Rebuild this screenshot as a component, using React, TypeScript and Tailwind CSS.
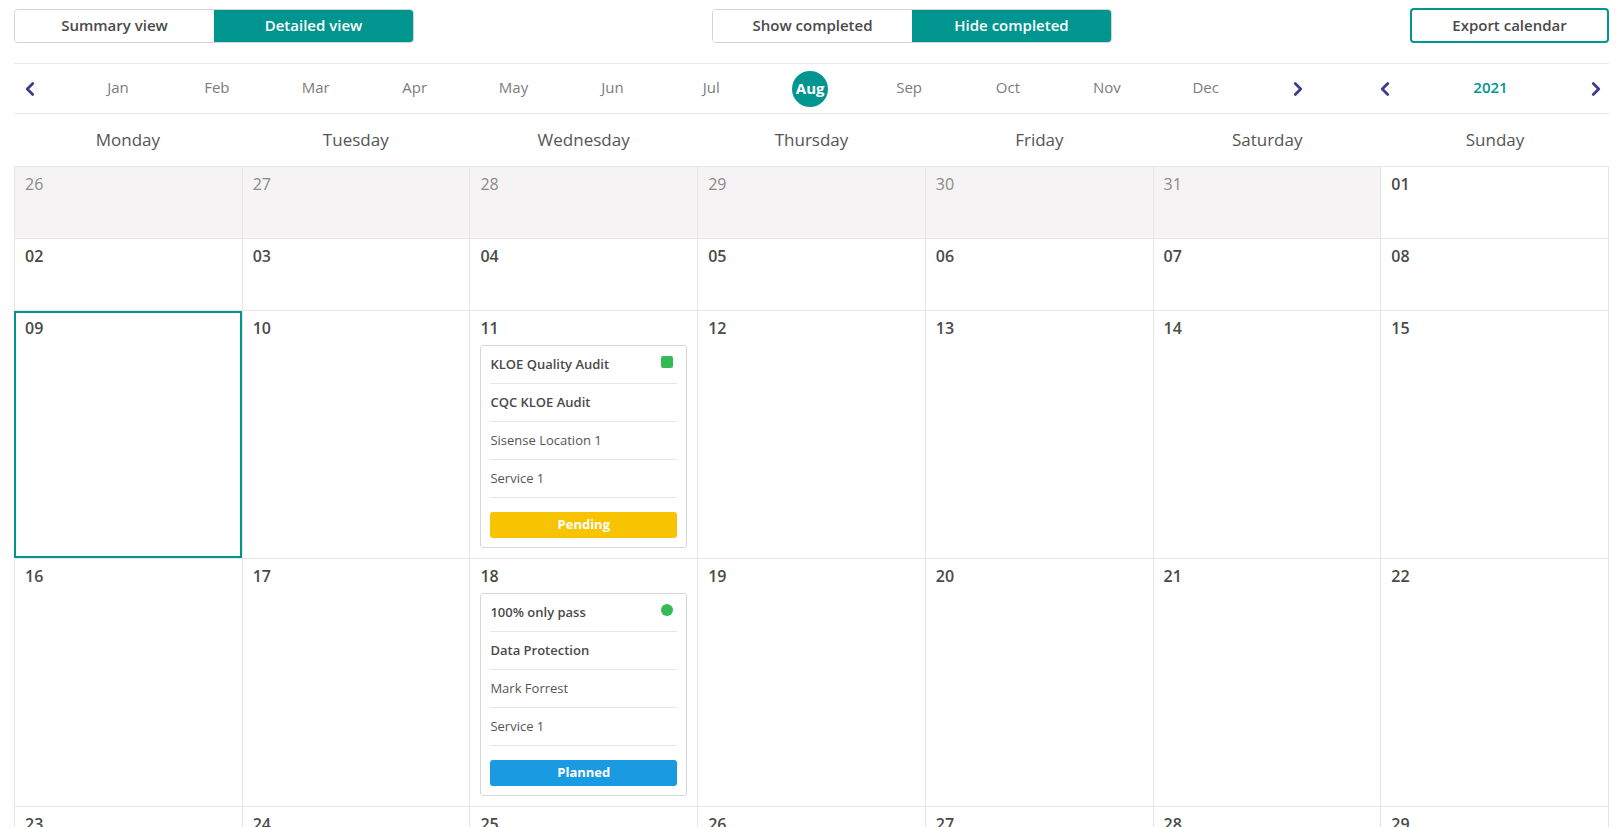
import React from 'react';
import { ChevronLeft, ChevronRight } from 'lucide-react';

const months = ['Jan', 'Feb', 'Mar', 'Apr', 'May', 'Jun', 'Jul', 'Aug', 'Sep', 'Oct', 'Nov', 'Dec'];
const weekdays = ['Monday', 'Tuesday', 'Wednesday', 'Thursday', 'Friday', 'Saturday', 'Sunday'];

interface CalEvent {
  title: string;
  audit: string;
  who: string;
  service: string;
  status: 'Pending' | 'Planned';
  marker: 'square' | 'circle';
}

interface Day {
  label: string;
  muted?: boolean;
  selected?: boolean;
  event?: CalEvent;
}

const weeks: { height: string; days: Day[] }[] = [
  {
    height: 'h-[72px]',
    days: [
      { label: '26', muted: true },
      { label: '27', muted: true },
      { label: '28', muted: true },
      { label: '29', muted: true },
      { label: '30', muted: true },
      { label: '31', muted: true },
      { label: '01' },
    ],
  },
  {
    height: 'h-[72px]',
    days: ['02', '03', '04', '05', '06', '07', '08'].map((l) => ({ label: l })),
  },
  {
    height: 'h-[248px]',
    days: [
      { label: '09', selected: true },
      { label: '10' },
      {
        label: '11',
        event: {
          title: 'KLOE Quality Audit',
          audit: 'CQC KLOE Audit',
          who: 'Sisense Location 1',
          service: 'Service 1',
          status: 'Pending',
          marker: 'square',
        },
      },
      { label: '12' },
      { label: '13' },
      { label: '14' },
      { label: '15' },
    ],
  },
  {
    height: 'h-[248px]',
    days: [
      { label: '16' },
      { label: '17' },
      {
        label: '18',
        event: {
          title: '100% only pass',
          audit: 'Data Protection',
          who: 'Mark Forrest',
          service: 'Service 1',
          status: 'Planned',
          marker: 'circle',
        },
      },
      { label: '19' },
      { label: '20' },
      { label: '21' },
      { label: '22' },
    ],
  },
  {
    height: 'h-[248px]',
    days: ['23', '24', '25', '26', '27', '28', '29'].map((l) => ({ label: l })),
  },
];

const EventCard: React.FC<{ ev: CalEvent }> = ({ ev }) => (
  <div className="mt-[6px] rounded-[3px] border border-[#d6d6d6] bg-white px-[9px] pb-[9px]">
    <div className="flex h-[38px] items-center justify-between border-b border-[#e6e6e6] text-[13px] font-semibold text-[#4a4a4a]">
      <span>{ev.title}</span>
      {ev.marker === 'square' ? (
        <span className="mb-[5px] mr-[4px] h-[12px] w-[12px] rounded-[2px] bg-[#35bb55]" />
      ) : (
        <span className="mb-[5px] mr-[4px] h-[12px] w-[12px] rounded-full bg-[#35bb55]" />
      )}
    </div>
    <div className="flex h-[38px] items-center border-b border-[#e6e6e6] text-[13px] font-semibold text-[#4a4a4a]">
      {ev.audit}
    </div>
    <div className="flex h-[38px] items-center border-b border-[#e6e6e6] text-[13px] text-[#555]">
      {ev.who}
    </div>
    <div className="flex h-[38px] items-center border-b border-[#e6e6e6] text-[13px] text-[#555]">
      {ev.service}
    </div>
    <div
      className={`mt-[14px] flex h-[26px] items-center justify-center rounded-[3px] text-[13px] font-bold text-white ${
        ev.status === 'Pending' ? 'bg-[#f8c300]' : 'bg-[#1a9ae1]'
      }`}
    >
      {ev.status}
    </div>
  </div>
);

export default function App() {
  return (
    <div
      className="flex h-[827px] flex-col overflow-hidden bg-white px-[14px] pt-[8px] text-[#4a4a4a]"
      style={{ fontFamily: '"Open Sans", "Noto Sans", sans-serif' }}
    >
      {/* toolbar */}
      <div className="flex shrink-0 items-center justify-between">
        <div className="flex h-[34px] w-[400px] overflow-hidden rounded-[4px] border border-[#d3d3d3]">
          <button className="flex-1 bg-white text-[15px] font-semibold text-[#4a4a4a]">Summary view</button>
          <button className="flex-1 bg-[#00968f] text-[15px] font-semibold text-white">Detailed view</button>
        </div>
        <div className="flex h-[34px] w-[400px] overflow-hidden rounded-[4px] border border-[#d3d3d3]">
          <button className="flex-1 bg-white text-[15px] font-semibold text-[#4a4a4a]">Show completed</button>
          <button className="flex-1 bg-[#00968f] text-[15px] font-semibold text-white">Hide completed</button>
        </div>
        <button className="h-[35px] w-[199px] rounded-[4px] border-2 border-[#00968f] bg-white text-[15px] font-semibold text-[#4a4a4a]">
          Export calendar
        </button>
      </div>

      {/* month / year nav */}
      <div className="mt-[20px] flex h-[51px] shrink-0 items-center border-y border-[#e8e8e8]">
        <div className="flex w-[54.5px] items-center pl-[5px] text-[#3d3b8e]">
          <ChevronLeft size={22} strokeWidth={3} />
        </div>
        {months.map((m) => (
          <div key={m} className="flex w-[98.9px] items-center justify-center">
            {m === 'Aug' ? (
              <span className="flex h-[36px] w-[36px] items-center justify-center rounded-full bg-[#00968f] text-[15px] font-bold text-white">
                Aug
              </span>
            ) : (
              <span className="pb-[2px] text-[15px] text-[#7c7c7c]">{m}</span>
            )}
          </div>
        ))}
        <div className="flex w-[58px] items-center justify-end pr-[4px] text-[#3d3b8e]">
          <ChevronRight size={22} strokeWidth={3} />
        </div>
        <div className="ml-auto flex w-[238px] items-center justify-between pl-[3px] pr-[2px] text-[#3d3b8e]">
          <ChevronLeft size={22} strokeWidth={3} />
          <span className="pb-[2px] text-[15px] font-semibold text-[#00968f]">2021</span>
          <ChevronRight size={22} strokeWidth={3} />
        </div>
      </div>

      {/* weekday header */}
      <div className="grid h-[52px] shrink-0 grid-cols-7 items-center">
        {weekdays.map((d) => (
          <div key={d} className="text-center text-[17px] text-[#555]">
            {d}
          </div>
        ))}
      </div>

      {/* month grid */}
      <div className="min-h-0 flex-1 overflow-hidden">
        <div className="border-l border-t border-[#e6e6e6]">
          {weeks.map((w, wi) => (
            <div key={wi} className={`grid grid-cols-7 ${w.height}`}>
              {w.days.map((d, di) => (
                <div
                  key={di}
                  className={`relative border-b border-r border-[#e6e6e6] px-[10px] pt-[6px] ${
                    d.muted ? 'bg-[#f5f3f4]' : 'bg-white'
                  }`}
                >
                  <div
                    className={`text-[16px] leading-[22px] ${
                      d.muted ? 'text-[#8a8a8a]' : 'font-semibold text-[#4a4a4a]'
                    }`}
                  >
                    {d.label}
                  </div>
                  {d.event && <EventCard ev={d.event} />}
                  {d.selected && (
                    <div className="pointer-events-none absolute -left-px top-0 bottom-0 right-0 border-2 border-[#00968f]" />
                  )}
                </div>
              ))}
            </div>
          ))}
        </div>
      </div>
    </div>
  );
}
